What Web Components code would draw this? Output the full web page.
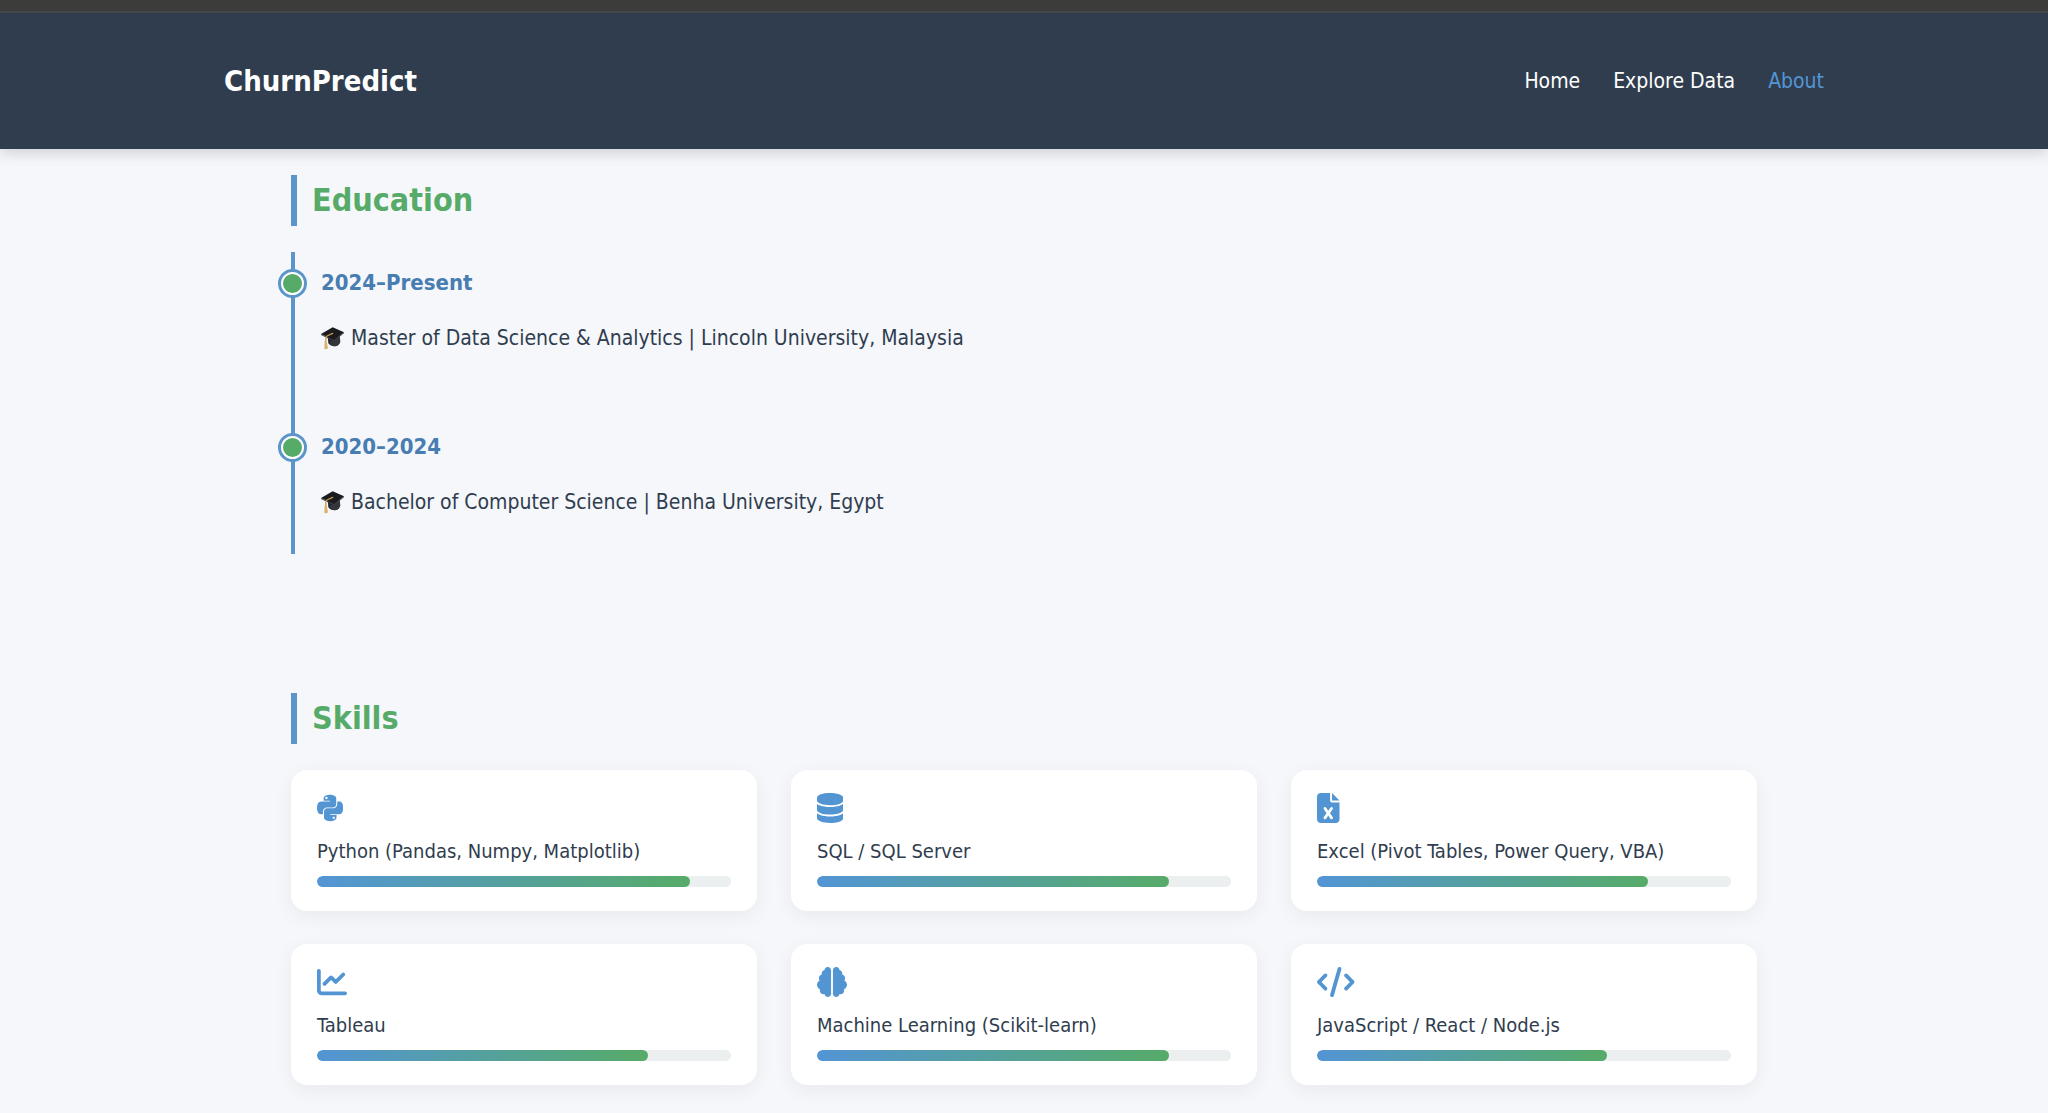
<!DOCTYPE html>
<html lang="en">
<head>
<meta charset="utf-8">
<title>ChurnPredict – About</title>
<style>
:root {
  --navy: #303d4e;
  --blue: #5395d3;
  --line: #5b95ca;
  --date: #487db2;
  --green: #57ab68;
  --page: #f5f7fb;
}
body {
  margin: 0;
  background: var(--page);
  color: var(--navy);
  font-family: "DejaVu Sans Condensed", "DejaVu Sans", Tahoma, sans-serif;
  font-size: 21px;
  line-height: 34px;
}
</style>
</head>
<body>
<about-page></about-page>

<template id="about-page">
  <style>
    :host { display: block; }
    main {
      box-sizing: border-box;
      max-width: 1466px;
      margin: 0 auto;
      padding: 26px 0;
      display: flex;
      flex-direction: column;
      gap: 139px;
    }
    .grid {
      display: grid;
      grid-template-columns: repeat(auto-fit, minmax(360px, 1fr));
      gap: 33px 34px;
    }
    .timeline {
      border-left: 4px solid var(--line);
      padding: 14px 0 35px 26px;
      display: flex;
      flex-direction: column;
      gap: 75px;
    }
  </style>
  <site-header>
    <nav-link href="#home">Home</nav-link>
    <nav-link href="#explore">Explore Data</nav-link>
    <nav-link href="#about" active>About</nav-link>
  </site-header>
  <main>
    <page-section heading="Education">
      <div class="timeline">
        <timeline-item date="2024–Present">Master of Data Science &amp; Analytics | Lincoln University, Malaysia</timeline-item>
        <timeline-item date="2020–2024">Bachelor of Computer Science | Benha University, Egypt</timeline-item>
      </div>
    </page-section>
    <page-section heading="Skills">
      <div class="grid">
        <skill-card icon="python" level="90">Python (Pandas, Numpy, Matplotlib)</skill-card>
        <skill-card icon="database" level="85">SQL / SQL Server</skill-card>
        <skill-card icon="excel" level="80">Excel (Pivot Tables, Power Query, VBA)</skill-card>
        <skill-card icon="chart" level="80">Tableau</skill-card>
        <skill-card icon="brain" level="85">Machine Learning (Scikit-learn)</skill-card>
        <skill-card icon="code" level="70">JavaScript / React / Node.js</skill-card>
      </div>
    </page-section>
  </main>
</template>

<template id="site-header">
  <style>
    :host {
      display: block;
      position: relative;
      background: var(--navy);
      border-top: 11px solid #3c3c3b;
      box-shadow: 0 5px 13px rgba(0, 0, 0, .14);
    }
    header { border-top: 2px solid #434848; }
    .inner {
      max-width: 1600px;
      margin: 0 auto;
      padding: 48px 0;
      display: flex;
      align-items: center;
      justify-content: space-between;
    }
    .logo { font-size: 29px; line-height: 40px; font-weight: bold; color: #fff; text-decoration: none; }
    nav { display: flex; gap: 33px; }
  </style>
  <header>
    <div class="inner">
      <a class="logo" href="#home">ChurnPredict</a>
      <nav><slot></slot></nav>
    </div>
  </header>
</template>

<template id="nav-link">
  <style>
    :host { display: block; }
    a { color: #fff; text-decoration: none; }
    :host([active]) a { color: var(--blue); }
  </style>
  <a><slot></slot></a>
</template>

<template id="page-section">
  <style>
    :host { display: block; }
    h2 {
      margin: 0 0 26px;
      padding-left: 15px;
      border-left: 6px solid var(--line);
      font-size: 32px;
      line-height: 51px;
      color: var(--green);
    }
  </style>
  <section>
    <h2></h2>
    <slot></slot>
  </section>
</template>

<template id="timeline-item">
  <style>
    :host { display: flex; flex-direction: column; gap: 21px; position: relative; }
    :host::before {
      content: "";
      position: absolute;
      left: -40px;
      top: 6px;
      width: 19px;
      height: 19px;
      border: 2px solid #fff;
      border-radius: 50%;
      background: var(--green);
      box-shadow: 0 0 0 3px var(--line);
    }
    h3 { margin: 0; font-size: 22px; line-height: 34px; color: var(--date); }
    p { margin: 0; display: flex; align-items: center; gap: 7px; }
    svg { width: 23px; height: 23px; flex: none; }
  </style>
  <h3></h3>
  <p>
    <svg viewBox="0 0 69 69" role="img" aria-label="Graduation cap">
      <path d="M20 27 49 28 57 43Q55 56 42 58 28 58 22 49Z" fill="#25262a"/>
      <path d="M26 45 40 38 56 25 58 44Q54 57 41 58 28 57 26 45Z" fill="#34353a"/>
      <path d="M0 21 35 1 69 16 39 39Z" fill="#1b1b1e"/>
      <path d="M0 21 39 39 69 16 69 19 39 43 0 24Z" fill="#3d3d42"/>
      <path d="M35 19 18 27Q14 30 14 45" fill="none" stroke="#c69a55" stroke-width="4" stroke-linecap="round"/>
      <path d="M11 43H17L21 64Q15 69 10 65Z" fill="#ddb16b"/>
    </svg>
    <slot></slot>
  </p>
</template>

<template id="skill-card">
  <style>
    :host {
      display: block;
      padding: 23px 26px 24px;
      border-radius: 16px;
      background: #fff;
      box-shadow: 0 5px 20px rgba(0, 0, 0, .06);
    }
    svg { display: block; height: 30px; fill: var(--blue); }
    label { display: block; margin-top: 12px; font-size: 20px; line-height: 32px; }
    progress {
      display: block;
      appearance: none;
      width: 100%;
      height: 11px;
      margin-top: 9px;
      border: 0;
      border-radius: 6px;
      overflow: hidden;
      background: #ebefef;
    }
    progress::-webkit-progress-bar { background: #ebefef; border-radius: 6px; }
    progress::-webkit-progress-value {
      border-radius: 6px;
      background: linear-gradient(90deg, #5395d5, #57ab68);
    }
  </style>
  <svg aria-hidden="true"><path/></svg>
  <label for="level"><slot></slot></label>
  <progress id="level" max="100"></progress>
</template>

<script>
const ICONS = {
  python: [448, "M439.8 200.5c-7.7-30.9-22.3-54.2-53.4-54.2h-40.1v47.4c0 36.8-31.2 67.8-66.8 67.8H172.7c-29.2 0-53.4 25-53.4 54.3v101.8c0 29 25.2 46 53.4 54.3 33.8 9.9 66.3 11.7 106.8 0 26.9-7.8 53.4-23.5 53.4-54.3v-40.7H226.2v-13.6h160.2c31.1 0 42.6-21.7 53.4-54.2 11.2-33.5 10.7-65.7 0-108.6zM286.2 404c11.1 0 20.1 9.1 20.1 20.3 0 11.3-9 20.4-20.1 20.4-11 0-20.1-9.2-20.1-20.4.1-11.3 9.1-20.3 20.1-20.3zM167.8 248.1h106.8c29.7 0 53.4-24.5 53.4-54.3V91.9c0-29-24.4-50.7-53.4-55.6-35.8-5.9-74.7-5.6-106.8.1-45.2 8-53.4 24.7-53.4 55.6v40.7h106.9v13.6h-147c-31.1 0-58.3 18.7-66.8 54.2-9.8 40.7-10.2 66.1 0 108.6 7.6 31.6 25.7 54.2 56.8 54.2H101v-48.8c0-35.3 30.5-66.4 66.8-66.4zm-6.7-142.6c-11.1 0-20.1-9.1-20.1-20.3.1-11.3 9-20.4 20.1-20.4 11 0 20.1 9.2 20.1 20.4s-9 20.3-20.1 20.3z"],
  database: [448, "M448 80v48c0 44.2-100.3 80-224 80S0 172.2 0 128V80C0 35.8 100.3 0 224 0S448 35.8 448 80zM393.2 214.7c20.8-7.4 39.9-16.9 54.8-28.6V288c0 44.2-100.3 80-224 80S0 332.2 0 288V186.1c14.9 11.8 34 21.2 54.8 28.6C99.7 230.7 159.5 240 224 240s124.3-9.3 169.2-25.3zM0 346.1c14.9 11.8 34 21.2 54.8 28.6C99.7 390.7 159.5 400 224 400s124.3-9.3 169.2-25.3c20.8-7.4 39.9-16.9 54.8-28.6V432c0 44.2-100.3 80-224 80S0 476.2 0 432V346.1z"],
  excel: [384, "M64 0C28.7 0 0 28.7 0 64V448c0 35.3 28.7 64 64 64H320c35.3 0 64-28.7 64-64V160H256c-17.7 0-32-14.3-32-32V0H64zM256 0V128H384L256 0zM155.7 250.2L192 302.1l36.3-51.9c7.6-10.9 22.6-13.5 33.4-5.9s13.5 22.6 5.9 33.4L221.3 344l46.4 66.2c7.6 10.9 5 25.8-5.9 33.4s-25.8 5-33.4-5.9L192 385.8l-36.3 51.9c-7.6 10.9-22.6 13.5-33.4 5.9s-13.5-22.6-5.9-33.4L162.7 344l-46.4-66.2c-7.6-10.9-5-25.8 5.9-33.4s25.8-5 33.4 5.9z"],
  chart: [512, "M64 64c0-17.7-14.3-32-32-32S0 46.3 0 64V400c0 44.2 35.8 80 80 80H480c17.7 0 32-14.3 32-32s-14.3-32-32-32H80c-8.8 0-16-7.2-16-16V64zm406.6 86.6c12.5-12.5 12.5-32.8 0-45.3s-32.8-12.5-45.3 0L320 210.7l-57.4-57.4c-12.5-12.5-32.8-12.5-45.3 0l-112 112c-12.5 12.5-12.5 32.8 0 45.3s32.8 12.5 45.3 0L240 221.3l57.4 57.4c12.5 12.5 32.8 12.5 45.3 0l128-128z"],
  brain: [512, "M184 0c30.9 0 56 25.1 56 56V456c0 30.9-25.1 56-56 56c-28.9 0-52.7-21.9-55.7-50.1c-5.2 1.4-10.7 2.1-16.3 2.1c-35.3 0-64-28.7-64-64c0-7.4 1.3-14.6 3.6-21.2C21.4 367.4 0 338.2 0 304c0-31.9 18.7-59.5 45.8-72.3C37.1 220.8 32 207 32 192c0-30.7 21.6-56.3 50.4-62.6C80.8 123.9 80 118 80 112c0-29.9 20.6-55.1 48.3-62.1C131.3 21.9 155.1 0 184 0zM328 0c28.9 0 52.6 21.9 55.7 49.9c27.8 7 48.3 32.1 48.3 62.1c0 6-.8 11.9-2.4 17.4c28.8 6.2 50.4 31.9 50.4 62.6c0 15-5.1 28.8-13.8 39.7C493.3 244.5 512 272.1 512 304c0 34.2-21.4 63.4-51.6 74.8c2.3 6.6 3.6 13.8 3.6 21.2c0 35.3-28.7 64-64 64c-5.6 0-11.1-.7-16.3-2.1c-3 28.2-26.8 50.1-55.7 50.1c-30.9 0-56-25.1-56-56V56c0-30.9 25.1-56 56-56z"],
  code: [640, "M392.8 1.2c-17-4.9-34.7 5-39.6 22l-128 448c-4.9 17 5 34.7 22 39.6s34.7-5 39.6-22l128-448c4.9-17-5-34.7-22-39.6zm80.6 120.1c-12.5 12.5-12.5 32.8 0 45.3L562.7 256l-89.4 89.4c-12.5 12.5-12.5 32.8 0 45.3s32.8 12.5 45.3 0l112-112c12.5-12.5 12.5-32.8 0-45.3l-112-112c-12.5-12.5-32.8-12.5-45.3 0zm-306.7 0c-12.5-12.5-32.8-12.5-45.3 0l-112 112c-12.5 12.5-12.5 32.8 0 45.3l112 112c12.5 12.5 32.8 12.5 45.3 0s12.5-32.8 0-45.3L77.3 256l89.4-89.4c12.5-12.5 12.5-32.8 0-45.3z"]
};

class TemplateElement extends HTMLElement {
  connectedCallback() {
    if (this.shadowRoot) return;
    const root = this.attachShadow({ mode: "open" });
    root.append(document.getElementById(this.localName).content.cloneNode(true));
    this.fill(root);
  }
  fill() {}
}

customElements.define("site-header", class extends TemplateElement {});

customElements.define("nav-link", class extends TemplateElement {
  fill(root) {
    const link = root.querySelector("a");
    link.href = this.getAttribute("href");
    if (this.hasAttribute("active")) link.setAttribute("aria-current", "page");
  }
});

customElements.define("page-section", class extends TemplateElement {
  fill(root) { root.querySelector("h2").textContent = this.getAttribute("heading"); }
});

customElements.define("timeline-item", class extends TemplateElement {
  fill(root) { root.querySelector("h3").textContent = this.getAttribute("date"); }
});

customElements.define("skill-card", class extends TemplateElement {
  fill(root) {
    const [width, path] = ICONS[this.getAttribute("icon")];
    root.querySelector("svg").setAttribute("viewBox", `0 0 ${width} 512`);
    root.querySelector("path").setAttribute("d", path);
    root.querySelector("progress").value = this.getAttribute("level");
  }
});

customElements.define("about-page", class extends TemplateElement {});
</script>
</body>
</html>
